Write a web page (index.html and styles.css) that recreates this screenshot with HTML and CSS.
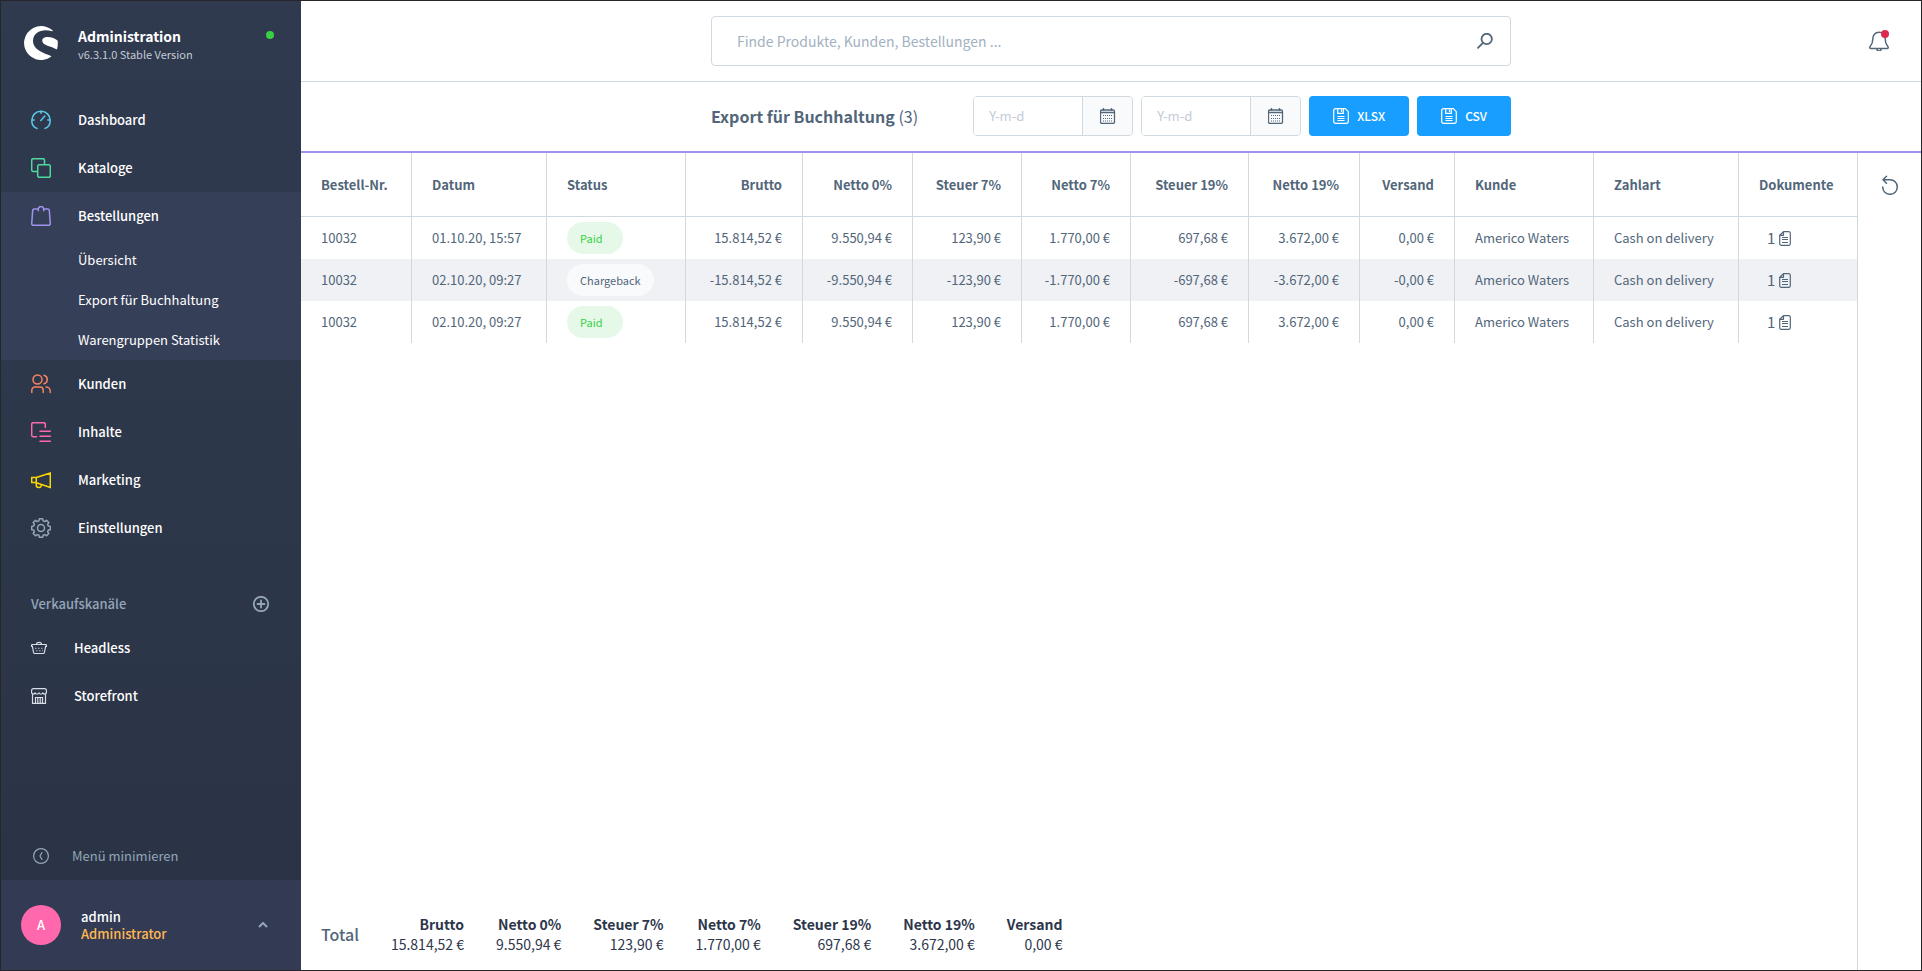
FILE: index.html
```html
<!DOCTYPE html>
<html lang="de">
<head>
<meta charset="utf-8">
<title>Export für Buchhaltung</title>
<link rel="stylesheet" href="styles.css">
</head>
<body>
<svg class="sprite" aria-hidden="true">
  <symbol id="calendar" viewBox="0 0 16 16"><path d="M2 2h11a1.500 1.500 0 0 1 1.500 1.500V14a1.500 1.500 0 0 1-1.500 1.500H2A1.500 1.500 0 0 1 .5 14V3.500A1.500 1.500 0 0 1 2 2zM.5 4.500h14M3.500 0v3M11.500 0v3" fill="none" stroke="currentColor" stroke-width="1.300"/><path d="M3 7.500h10M3 10.500h10M3 13h10" stroke="currentColor" stroke-width="1" stroke-dasharray="1 1"/></symbol>
  <symbol id="save" viewBox="0 0 16 16"><path d="M2.500.7h9.800l3 3v9.800a1.800 1.800 0 0 1-1.800 1.800h-11a1.800 1.800 0 0 1-1.800-1.800v-11A1.800 1.800 0 0 1 2.500.7zM4.700.7v4.600h5.600V.7M8.500 1.500V4M4.500 8.500h7M4.500 10.500h7M4.500 12.500h7" fill="none" stroke="currentColor" stroke-width="1.200"/></symbol>
  <symbol id="doc" viewBox="0 0 12 15"><path d="M4.500.7h5.300a1.500 1.500 0 0 1 1.500 1.500v10.600a1.500 1.500 0 0 1-1.500 1.500H2.200a1.500 1.500 0 0 1-1.500-1.500V4.300zM4.500.7v3.600H.7" fill="none" stroke="currentColor" stroke-width="1.200" stroke-linejoin="round"/><path d="M3 6.500h6M3 8.500h6M3 11.500h6" stroke="currentColor" stroke-width="1"/></symbol>
</svg>
<div class="app">
  <aside class="sidebar">
    <header class="brand">
      <svg class="brand-logo" viewBox="0 0 34 34" aria-hidden="true"><path fill="#fff" d="M28.500 4.300C25.400 1.600 21.400 0 17 0A17 17 0 1 0 27 30.800c.4-.3.300-.7-.1-.9C20 27.300 9 24 9 14.800 9 8.300 15 4.300 21.500 4.300c2.400 0 4.600.3 6.700.9.500.1.800-.5.300-.9z"/><path fill="#fff" d="M32.800 14C30.500 11.800 27 10.900 23.500 10.900c-3 0-5.300 1.500-5.300 3.500 0 5.300 9.500 5.600 14 8.800.3.200.8.100.9-.3.700-2.600.9-6 .6-7.900-.1-.4-.5-.7-.9-1z"/></svg>
      <div class="brand-text"><div class="brand-name">Administration</div><div class="brand-version">v6.3.1.0 Stable Version</div></div>
      <span class="status-dot"></span>
    </header>
    <nav class="nav">
      <a class="nav-item" href="#"><svg class="icon20 c-blue" viewBox="0 0 20 20"><path d="M6 18.400C2.800 17.300.8 14 .8 10.400a9.200 9.200 0 0 1 18.400 0c0 3.600-2 6.900-5.200 8M10 1v2.300M.8 10h2.400M16.800 10h2.400M9.800 10.400l4-4.300"/></svg>Dashboard</a>
      <a class="nav-item" href="#"><svg class="icon20 c-green" viewBox="0 0 20 20"><rect x="6.700" y="6.700" width="12.600" height="12.600" rx="1.500"/><path d="M13.500 6V2.200A1.500 1.500 0 0 0 12 .7H2.200A1.500 1.500 0 0 0 .7 2.200V12a1.500 1.500 0 0 0 1.500 1.500H6"/></svg>Kataloge</a>
      <div class="nav-group">
        <a class="nav-item" href="#"><svg class="icon20 c-violet" viewBox="0 0 20 20"><path d="M7.300 4.800V3.200a2.500 2.500 0 0 1 5.400 0v1.600M7 3H3.200A1.500 1.500 0 0 0 1.700 4.400L.7 17.700a1.500 1.500 0 0 0 1.500 1.600h15.600a1.500 1.500 0 0 0 1.500-1.600l-1-13.300A1.500 1.500 0 0 0 16.800 3H13"/></svg>Bestellungen</a>
        <a class="nav-sub" href="#">Übersicht</a>
        <a class="nav-sub" href="#">Export für Buchhaltung</a>
        <a class="nav-sub" href="#">Warengruppen Statistik</a>
      </div>
      <a class="nav-item" href="#"><svg class="icon20 c-orange" viewBox="0 0 20 20"><circle cx="6.500" cy="5.500" r="4.500"/><path d="M.8 18.500v-2.300A3.200 3.200 0 0 1 4 13h5a3.200 3.200 0 0 1 3.200 3.200v2.300M13 1.200a4.400 4.400 0 0 1 0 8.500M15 13a4 4 0 0 1 4.200 3.700v1.800"/></svg>Kunden</a>
      <a class="nav-item" href="#"><svg class="icon20 c-pink" viewBox="0 0 20 20"><path d="M14.300 5.500V2.200A1.500 1.500 0 0 0 12.800.7H2.200A1.500 1.500 0 0 0 .7 2.200v11a1.500 1.500 0 0 0 1.500 1.500h3.300M9 9.200h10.300M9 14.200h10.300M9 19.200h10.300"/></svg>Inhalte</a>
      <a class="nav-item" href="#"><svg class="icon20 c-yellow" viewBox="0 0 20 20"><path d="M.7 7.500h4.600v5H.7zM5.300 7.500L19.300 3v14.500L5.300 12.700M5.300 13.500v1.300a2.500 2.500 0 0 0 5 .4v-.7"/></svg>Marketing</a>
      <a class="nav-item" href="#"><svg class="icon20 c-grey" viewBox="0 0 20 20"><circle cx="10" cy="10" r="3.500"/><path d="M8.300.8h3.400l.4 2.100 1.600.7 1.800-1.300 2.300 2.300-1.200 1.800.7 1.600 2.100.4v3.300l-2.100.4-.7 1.600 1.200 1.800-2.300 2.300-1.800-1.200-1.600.6-.4 2.100H8.300l-.4-2.100-1.600-.6-1.800 1.200-2.300-2.300 1.200-1.800-.7-1.600-2-.4V8.400l2-.4.700-1.600-1.200-1.800 2.300-2.300 1.800 1.300 1.600-.7z" stroke-linejoin="round"/></svg>Einstellungen</a>
    </nav>
    <section class="channels">
      <div class="channels-head"><span>Verkaufskanäle</span><button class="plain" aria-label="Verkaufskanal hinzufügen"><svg class="icon16 c-grey bold" viewBox="0 0 16 16"><circle cx="8" cy="8" r="7.200"/><path d="M8 4.500v7M4.500 8h7"/></svg></button></div>
      <a class="channel" href="#"><svg class="icon16 c-light" viewBox="0 0 16 16"><path d="M1.200 4.500h13.600a.6.6 0 0 1 .6.600v1.300h-.8l-1.200 6.100a1.200 1.200 0 0 1-1.200 1H3.800a1.200 1.200 0 0 1-1.200-1L1.400 6.400H.6V5.100a.6.6 0 0 1 .6-.6zM5.500 4.300C5.500 1.700 10.500 1.700 10.500 4.300"/><path d="M4 8.300h9M5 10.800h7" stroke-width=".8" stroke-linecap="butt" stroke-dasharray="1.500 1.500"/></svg>Headless</a>
      <a class="channel" href="#"><svg class="icon16 c-light" viewBox="0 0 16 16"><path d="M2.500.6h11A1.900 1.900 0 0 1 15.400 2.500v2.300c-.5 1.600-2.500 1.600-3.700.2-.9 1.500-2.800 1.500-3.700 0-.9 1.500-2.800 1.500-3.700 0C3.100 6.400 1.100 6.400.6 4.800V2.500A1.900 1.900 0 0 1 2.500.6zM1.500 6.500v8.900h13V6.500M4.500 15.400V9.500h7v5.900M6.800 9.500v5.900M9.200 9.500v5.900"/></svg>Storefront</a>
    </section>
    <button class="collapse"><svg class="icon16 c-grey" viewBox="0 0 16 16"><circle cx="8" cy="8" r="7.400"/><path d="M9 4.500L7 8l2 3.500"/></svg>Menü minimieren</button>
    <button class="user"><span class="avatar">A</span><span class="user-text"><span class="user-name">admin</span><span class="user-role">Administrator</span></span><svg class="chevron" viewBox="0 0 10 6"><path d="M1 5l4-4 4 4"/></svg></button>
  </aside>
  <main class="main">
    <div class="topbar">
      <div class="search"><input type="text" aria-label="Suche" placeholder="Finde Produkte, Kunden, Bestellungen ..."><svg class="icon16 c-slate bold" viewBox="0 0 16 16"><circle cx="9.700" cy="6" r="5.200"/><path d="M5.900 9.800L1 14.800"/></svg></div>
      <button class="plain bell" aria-label="Benachrichtigungen"><svg class="icon20 c-slate" viewBox="0 0 20 20"><path d="M3.800 8C3.800 4 6 1.300 10 1.300S16.200 4 16.200 8c0 4.500 1 5.700 2.500 7.300.9 1 .6 2.200-.6 2.200H1.900c-1.200 0-1.500-1.200-.6-2.200C2.800 13.700 3.800 12.500 3.800 8zM8 18a2 2 0 0 0 4 0"/></svg><span class="bell-dot"></span></button>
    </div>
    <div class="pagebar">
      <div class="pagebar-inner">
        <h1 class="title">Export für Buchhaltung <span>(3)</span></h1>
        <div class="date"><input type="text" aria-label="Von" placeholder="Y-m-d"><button aria-label="Kalender öffnen"><svg class="glyph16" viewBox="0 0 16 16"><use href="#calendar"/></svg></button></div>
        <div class="date"><input type="text" aria-label="Bis" placeholder="Y-m-d"><button aria-label="Kalender öffnen"><svg class="glyph16" viewBox="0 0 16 16"><use href="#calendar"/></svg></button></div>
        <button class="primary"><svg class="glyph16" viewBox="0 0 16 16"><use href="#save"/></svg>XLSX</button>
        <button class="primary"><svg class="glyph16" viewBox="0 0 16 16"><use href="#save"/></svg>CSV</button>
      </div>
    </div>
    <div class="content">
      <div class="listing">
        <table class="grid">
          <colgroup><col class="w-nr"><col class="w-date"><col class="w-status"><col class="w-gross"><col class="w-sum"><col class="w-tax7"><col class="w-tax7"><col class="w-docs"><col class="w-nr"><col class="w-ship"><col class="w-status"><col class="w-pay"><col class="w-docs"></colgroup>
          <thead><tr><th>Bestell-Nr.</th><th>Datum</th><th>Status</th><th class="num">Brutto</th><th class="num">Netto 0%</th><th class="num">Steuer 7%</th><th class="num">Netto 7%</th><th class="num">Steuer 19%</th><th class="num">Netto 19%</th><th class="num">Versand</th><th>Kunde</th><th>Zahlart</th><th>Dokumente</th></tr></thead>
          <tbody>
            <tr><td>10032</td><td>01.10.20, 15:57</td><td><span class="pill paid">Paid</span></td><td class="num">15.814,52 €</td><td class="num">9.550,94 €</td><td class="num">123,90 €</td><td class="num">1.770,00 €</td><td class="num">697,68 €</td><td class="num">3.672,00 €</td><td class="num">0,00 €</td><td>Americo Waters</td><td>Cash on delivery</td><td><span class="docs">1<svg class="doc" viewBox="0 0 12 15"><use href="#doc"/></svg></span></td></tr>
            <tr><td>10032</td><td>02.10.20, 09:27</td><td><span class="pill">Chargeback</span></td><td class="num">-15.814,52 €</td><td class="num">-9.550,94 €</td><td class="num">-123,90 €</td><td class="num">-1.770,00 €</td><td class="num">-697,68 €</td><td class="num">-3.672,00 €</td><td class="num">-0,00 €</td><td>Americo Waters</td><td>Cash on delivery</td><td><span class="docs">1<svg class="doc" viewBox="0 0 12 15"><use href="#doc"/></svg></span></td></tr>
            <tr><td>10032</td><td>02.10.20, 09:27</td><td><span class="pill paid">Paid</span></td><td class="num">15.814,52 €</td><td class="num">9.550,94 €</td><td class="num">123,90 €</td><td class="num">1.770,00 €</td><td class="num">697,68 €</td><td class="num">3.672,00 €</td><td class="num">0,00 €</td><td>Americo Waters</td><td>Cash on delivery</td><td><span class="docs">1<svg class="doc" viewBox="0 0 12 15"><use href="#doc"/></svg></span></td></tr>
          </tbody>
        </table>
        <div class="totals">
          <div class="totals-label">Total</div>
          <dl><dt>Brutto</dt><dd>15.814,52 €</dd></dl>
          <dl><dt>Netto 0%</dt><dd>9.550,94 €</dd></dl>
          <dl><dt>Steuer 7%</dt><dd>123,90 €</dd></dl>
          <dl><dt>Netto 7%</dt><dd>1.770,00 €</dd></dl>
          <dl><dt>Steuer 19%</dt><dd>697,68 €</dd></dl>
          <dl><dt>Netto 19%</dt><dd>3.672,00 €</dd></dl>
          <dl><dt>Versand</dt><dd>0,00 €</dd></dl>
        </div>
      </div>
      <div class="tools"><button class="plain" aria-label="Aktualisieren"><svg class="icon20 c-slate" viewBox="0 0 20 20"><path d="M2.700 12A7.300 7.300 0 1 0 10 4.700H3M6.500 1.200L3 4.700l3.500 3.500"/></svg></button></div>
    </div>
  </main>
</div>
</body>
</html>
```
FILE: styles.css
```css
* { box-sizing: border-box; }

body {
  margin: 0;
  font: 13px/20px "Noto Sans CJK SC", "Noto Sans", sans-serif;
  color: #52667a;
}

a { color: inherit; text-decoration: none; }
button, input { font: inherit; color: inherit; margin: 0; }
button { border: 0; cursor: pointer; }
svg { display: block; flex: none; }

.sprite { position: absolute; width: 0; height: 0; }

.app {
  display: flex;
  min-height: 100vh;
  border: 1px solid #26262a;
  background: #fff;
}

/* Icons */
.icon20, .icon16 { fill: none; stroke: currentColor; stroke-width: 1.5; stroke-linecap: round; }
.icon20 { width: 20px; height: 20px; }
.icon16, .glyph16 { width: 16px; height: 16px; }
.icon16 { stroke-width: 1.2; }
.icon16.bold { stroke-width: 1.8; }
.c-blue { color: #5cc8e8; }
.c-green { color: #4fd99c; }
.c-violet { color: #a092f0; }
.c-orange { color: #f58461; }
.c-pink { color: #ff68ac; }
.c-yellow { color: #ffd700; }
.c-grey { color: #94a6b8; }
.c-light { color: #d8dde6; }
.c-slate { color: #52667a; }

.plain { background: none; padding: 0; }

/* Sidebar */
.sidebar {
  width: 300px;
  flex: none;
  display: flex;
  flex-direction: column;
  background: linear-gradient(#303a4f, #2d374a 50%, #2a3345);
  color: #fff;
}

.brand {
  display: flex;
  align-items: flex-start;
  gap: 20px;
  height: 95px;
  padding: 25px 27px 0 23px;
}
.brand-logo { width: 34px; height: 34px; }
.brand-text { flex: 1; }
.brand-name { font-size: 14px; font-weight: 600; line-height: 20px; }
.brand-version { font-size: 11px; line-height: 16px; color: #c3cad5; }
.status-dot { width: 8px; height: 8px; margin-top: 5px; border-radius: 50%; background: #37d046; }

.nav-item {
  display: flex;
  align-items: center;
  gap: 27px;
  height: 48px;
  padding-left: 30px;
  font-weight: 500;
}
.nav-group { background: #363f58; }
.nav-sub { display: block; padding: 10px 0 10px 77px; }

.channels { padding: 31px 32px 0 30px; }
.channels-head {
  display: flex;
  align-items: center;
  justify-content: space-between;
  height: 41px;
  font-weight: 500;
  color: #94a6b8;
}
.channel { display: flex; align-items: center; gap: 27px; height: 48px; font-weight: 500; }

.collapse {
  display: flex;
  align-items: center;
  gap: 23px;
  height: 48px;
  margin-top: auto;
  padding: 0 32px;
  background: none;
  color: #94a6b8;
}

.user {
  display: flex;
  align-items: center;
  gap: 20px;
  height: 90px;
  padding: 0 33px 0 20px;
  background: #323b53;
  text-align: left;
  font-weight: 500;
}
.avatar {
  width: 40px;
  height: 40px;
  border-radius: 50%;
  background: #ff68ac;
  color: #fff;
  line-height: 40px;
  text-align: center;
}
.user-text { flex: 1; display: flex; flex-direction: column; line-height: 17px; }
.user-name { color: #fff; }
.user-role { color: #ffb752; }
.chevron { width: 10px; height: 6px; fill: none; stroke: #94a6b8; stroke-width: 2; }

/* Main area */
.main { flex: 1; min-width: 0; display: flex; flex-direction: column; }

.topbar {
  display: grid;
  grid-template-columns: 1fr minmax(0, 800px) 1fr;
  align-items: center;
  height: 81px;
  padding: 0 32px;
  border-bottom: 1px solid #d1d9e0;
}
.search {
  grid-column: 2;
  display: flex;
  align-items: center;
  height: 50px;
  padding: 0 17px 0 25px;
  border: 1px solid #d1d9e0;
  border-radius: 4px;
}
.search input { flex: 1; border: 0; outline: 0; padding: 0; background: none; font-size: 14px; }
.search input::placeholder { color: #a3b1bf; opacity: 1; }
.bell { position: relative; justify-self: end; }
.bell-dot {
  position: absolute;
  top: -1px;
  right: 0;
  width: 8px;
  height: 8px;
  border-radius: 50%;
  background: #de294c;
}

.pagebar { padding: 14px 32px 15px; border-bottom: 2px solid #a092f0; }
.pagebar-inner { display: flex; align-items: center; gap: 8px; max-width: 800px; margin: 0 auto; }
.title { flex: 1; margin: 0; font-size: 16px; line-height: 24px; font-weight: 600; }
.title span { font-weight: 400; }

.date {
  display: flex;
  width: 160px;
  height: 40px;
  border: 1px solid #d1d9e0;
  border-radius: 4px;
  overflow: hidden;
}
.date input { flex: 1; min-width: 0; border: 0; outline: 0; padding: 0 15px; }
.date input::placeholder { color: #c2ccd6; opacity: 1; }
.date button {
  display: flex;
  align-items: center;
  justify-content: center;
  width: 50px;
  padding: 0;
  border-left: 1px solid #d1d9e0;
  background: #f9fafb;
}
.primary {
  display: flex;
  align-items: center;
  gap: 8px;
  height: 40px;
  padding: 0 24px;
  border-radius: 4px;
  background: #189eff;
  color: #fff;
  font-size: 12px;
  font-weight: 500;
}

.content { flex: 1; display: flex; }
.listing {
  flex: 1;
  min-width: 0;
  display: flex;
  flex-direction: column;
  justify-content: space-between;
}

.grid { width: 100%; table-layout: fixed; border-collapse: separate; border-spacing: 0; }
.grid th, .grid td {
  padding: 0 20px;
  border-right: 1px solid #d1d9e0;
  text-align: left;
  white-space: nowrap;
}
.grid th { height: 64px; border-bottom: 1px solid #d1d9e0; font-weight: 700; }
.grid td { height: 42px; }
.grid th:last-child, .grid td:last-child { border-right: 0; }
.grid .num { text-align: right; }
.grid tbody tr:nth-child(even) { background: #f0f1f5; }
.w-nr { width: 111px; }
.w-date { width: 135px; }
.w-status { width: 139px; }
.w-gross { width: 117px; }
.w-sum { width: 110px; }
.w-tax7 { width: 109px; }
.w-ship { width: 95px; }
.w-pay { width: 145px; }
.w-docs { width: 118px; }

.pill {
  display: inline-block;
  min-width: 56px;
  padding: 0 13px;
  border-radius: 16px;
  background: #f9fafb;
  font-size: 11px;
  line-height: 32px;
  vertical-align: middle;
}
.paid { background: #e6f9e8; color: #37d046; }
.docs { display: flex; align-items: center; gap: 4px; padding-left: 8px; font-size: 15px; }
.doc { width: 12px; height: 15px; }

.totals { display: flex; align-items: center; gap: 32px; padding: 0 20px 16px; font-size: 14px; }
.totals-label { font-size: 16px; font-weight: 500; }
.totals dl { margin: 0; text-align: right; color: #2d364b; }
.totals dt { font-weight: 700; }
.totals dd { margin: 0; }

.tools { width: 64px; padding: 22px 0 0 22px; border-left: 1px solid #d1d9e0; }
```
